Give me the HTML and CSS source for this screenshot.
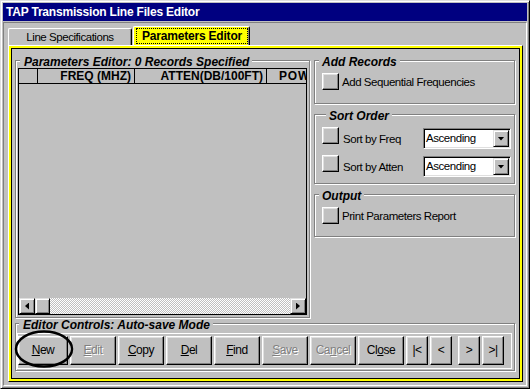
FILE: index.html
```html
<!DOCTYPE html>
<html lang="en">
<head>
    <meta charset="UTF-8">
    <title>TAP Transmission Line Files Editor</title>
    <link rel="stylesheet" href="styles.css">
</head>
<body>
<div class="window">
    <div class="titlebar">TAP Transmission Line Files Editor</div>
    <div class="client">
        <div class="tabs">
            <div class="tab">Line Specifications</div>
            <div class="tab tab-active"><span class="focus">Parameters Editor</span></div>
        </div>
        <div class="panel">
            <div class="top-row">
                <fieldset class="grp grp-list">
                    <legend>Parameters Editor: 0 Records Specified</legend>
                    <div class="grid">
                        <div class="grid-head">
                            <div class="hcell hcell-row"></div>
                            <div class="hcell hcell-freq">FREQ (MHZ)</div>
                            <div class="hcell hcell-atten">ATTEN(DB/100FT)</div>
                            <div class="hcell hcell-pow">POWER</div>
                        </div>
                        <div class="grid-body"></div>
                        <div class="hscroll">
                            <div class="sbtn"><span class="tri-left"></span></div>
                            <div class="sbtn thumb"></div>
                            <div class="track"></div>
                            <div class="sbtn"><span class="tri-right"></span></div>
                        </div>
                    </div>
                </fieldset>

                <div class="side">
                    <fieldset class="grp grp-side">
                        <legend>Add Records</legend>
                        <div class="opt opt-add">
                            <span class="sq"></span>
                            <span class="lbl">Add Sequential Frequencies</span>
                        </div>
                    </fieldset>

                    <fieldset class="grp grp-side grp-sort">
                        <legend>Sort Order</legend>
                        <div class="sort-row">
                            <span class="sq"></span>
                            <span class="lbl">Sort by Freq</span>
                            <div class="combo"><span class="combo-text">Ascending</span><span class="combo-btn"><span class="tri-down"></span></span></div>
                        </div>
                        <div class="sort-row">
                            <span class="sq"></span>
                            <span class="lbl">Sort by Atten</span>
                            <div class="combo"><span class="combo-text">Ascending</span><span class="combo-btn"><span class="tri-down"></span></span></div>
                        </div>
                    </fieldset>

                    <fieldset class="grp grp-side grp-out">
                        <legend>Output</legend>
                        <div class="opt opt-out">
                            <span class="sq"></span>
                            <span class="lbl">Print Parameters Report</span>
                        </div>
                    </fieldset>
                </div>
            </div>

            <fieldset class="grp grp-ctrl">
                <legend>Editor Controls: Auto-save Mode</legend>
                <div class="btn-frame">
                    <div class="btn btn-new"><u>N</u>ew</div>
                    <div class="btn off"><u>E</u>dit</div>
                    <div class="btn"><u>C</u>opy</div>
                    <div class="btn"><u>D</u>el</div>
                    <div class="btn"><u>F</u>ind</div>
                    <div class="btn off"><u>S</u>ave</div>
                    <div class="btn off">Ca<u>n</u>cel</div>
                    <div class="btn">Cl<u>o</u>se</div>
                    <div class="btn btn-nav">|&lt;</div>
                    <div class="btn btn-nav">&lt;</div>
                    <div class="btn btn-nav btn-next">&gt;</div>
                    <div class="btn btn-nav">&gt;|</div>
                </div>
            </fieldset>
        </div>
    </div>

    <!-- hand-drawn circle around the New button -->
    <svg class="circle" width="62" height="44" viewBox="0 0 62 44">
        <ellipse cx="30" cy="21" rx="28" ry="17.5" fill="none" stroke="#000" stroke-width="2.5"/>
    </svg>
</div>
</body>
</html>
```

FILE: styles.css
```css
* { box-sizing: border-box; }
body { margin: 0; font-family: "Liberation Sans", Arial, sans-serif; font-size: 11.5px; letter-spacing: -0.45px; color: #000; background: #c0c0c0; }

.window { position: relative; width: 530px; height: 389px; background: #c0c0c0; border: 1px solid; border-color: #dfdfdf #000 #000 #dfdfdf; box-shadow: inset 1px 1px #fff, inset -1px -1px #808080; padding: 2px; }
.titlebar { height: 18px; line-height: 18px; padding-left: 3px; background: #000080; color: #fff; font-size: 12px; font-weight: bold; letter-spacing: -0.2px; }
.client { margin-top: 1px; height: 364px; border: 1px solid; border-color: #808080 #fff #fff #808080; padding: 3px 3px 3px 4px; }

/* tabs */
.tabs { display: flex; align-items: flex-end; gap: 1px; height: 19px; }
.tab { width: 124px; height: 17px; border: 1px solid #fff; border-right-color: #000; border-bottom: 0; border-radius: 2px 2px 0 0; box-shadow: inset -1px 0 #808080; text-align: center; line-height: 16px; }
.tab-active { width: 117px; height: 19px; background: #ff0; font-size: 12px; font-weight: bold; letter-spacing: -0.2px; padding: 1px 1px 0 2px; }
.focus { display: block; height: 16px; border: 1px dotted #000; line-height: 14px; }

.panel { height: 337px; border: 1px solid; border-color: #fff #000 #000 #fff; box-shadow: inset 0 0 0 2px #ff0, inset 0 0 0 3px #000; padding: 9px 7px 0 6px; }
.top-row { display: flex; gap: 4px; height: 263px; }

/* etched group boxes */
.grp { margin: 0; padding: 0; min-width: 0; border: 1px solid #808080; box-shadow: inset 1px 1px #fff, 1px 1px #fff; }
.grp legend { height: 10px; line-height: 14px; padding: 0 3px 0 3px; margin-left: 4px; font-size: 12px; font-weight: bold; font-style: italic; letter-spacing: 0; background: #c0c0c0; white-space: nowrap; }

.grp-list { width: 295px; height: 263px; padding: 3px 2px 2px 2px; }
.grp-list legend { margin-left: 2px; padding-left: 4px; }

.grid { height: 247px; border: 1px solid #000; display: flex; flex-direction: column; overflow: hidden; }
.grid-head { display: flex; height: 15px; border-bottom: 1px solid #000; }
.hcell { height: 14px; line-height: 14px; font-size: 12px; font-weight: bold; letter-spacing: 0; white-space: nowrap; overflow: hidden; text-align: right; padding-right: 3px; border-right: 1px solid #000; }
.hcell-row { width: 19px; }
.hcell-freq { width: 97px; }
.hcell-atten { width: 132px; }
.hcell-pow { flex: 1; text-align: left; padding-left: 12px; letter-spacing: 0.8px; border-right: 0; }
.grid-body { flex: 1; }

.hscroll { display: flex; height: 16px; }
.sbtn { width: 16px; height: 16px; border: 1px solid; border-color: #dfdfdf #000 #000 #dfdfdf; box-shadow: inset 1px 1px #fff, inset -1px -1px #808080; display: flex; align-items: center; justify-content: center; }
.thumb { width: 15px; }
.track { flex: 1; background: repeating-conic-gradient(#c0c0c0 0 25%, #fff 0 50%) 0 0 / 2px 2px; }
.tri-left, .tri-right { width: 4px; height: 7px; background: #000; }
.tri-left { clip-path: polygon(100% 0, 100% 100%, 0 50%); }
.tri-right { clip-path: polygon(0 0, 0 100%, 100% 50%); }
.tri-down { width: 7px; height: 4px; background: #000; clip-path: polygon(0 0, 100% 0, 50% 100%); }

/* right column */
.side { width: 201px; display: flex; flex-direction: column; gap: 5px; }
.grp-side legend { margin-left: 4px; padding-left: 3px; }
.opt { display: flex; align-items: center; padding-left: 7px; }
.opt-add { padding-top: 8px; padding-bottom: 13px; }
.opt-out { padding-top: 8px; padding-bottom: 12px; }
.sq { width: 17px; height: 17px; flex: none; border: 1px solid; border-color: #fff #000 #000 #fff; box-shadow: inset -1px -1px #808080, inset 1px 1px #dfdfdf; }
.lbl { margin-left: 3px; white-space: nowrap; }

.grp-sort { padding: 9px 0 6px 7px; }
.sort-row { display: flex; align-items: center; height: 21px; }
.sort-row + .sort-row { margin-top: 7px; }
.sort-row .sq { align-self: flex-start; margin-top: -1px; }
.sort-row .lbl { flex: 1; margin-left: 4px; }
.combo { width: 88px; height: 21px; margin-right: 3px; display: flex; padding: 1px 1px 1px 2px; background: #fff; border: 1px solid; border-color: #808080 #fff #fff #808080; box-shadow: inset 1px 1px #000, inset -1px -1px #dfdfdf; }
.combo-text { flex: 1; line-height: 17px; }
.combo-btn { width: 16px; height: 17px; display: flex; align-items: center; justify-content: center; background: #c0c0c0; border: 1px solid; border-color: #dfdfdf #000 #000 #dfdfdf; box-shadow: inset 1px 1px #fff, inset -1px -1px #808080; }

/* editor controls */
.grp-ctrl { width: 500px; padding: 5px 2px 1px 1px; }
.grp-ctrl legend { margin-left: 2px; padding-left: 4px; }
.btn-frame { display: flex; gap: 2px; height: 36px; border: 1px solid #fff; padding: 2px 0; }
.btn { width: 46px; height: 29px; line-height: 27px; text-align: center; font-size: 12px; border: 1px solid; border-color: #fff #000 #000 #fff; box-shadow: inset -1px -1px #808080, inset 1px 1px #dfdfdf; }
.btn-new { width: 50px; }
.btn-nav { width: 22px; }
.btn-next { margin-left: 4px; }
.off { color: #808080; text-shadow: 1px 1px 0 #fff; }

.circle { position: absolute; left: 13px; top: 327px; }
```
